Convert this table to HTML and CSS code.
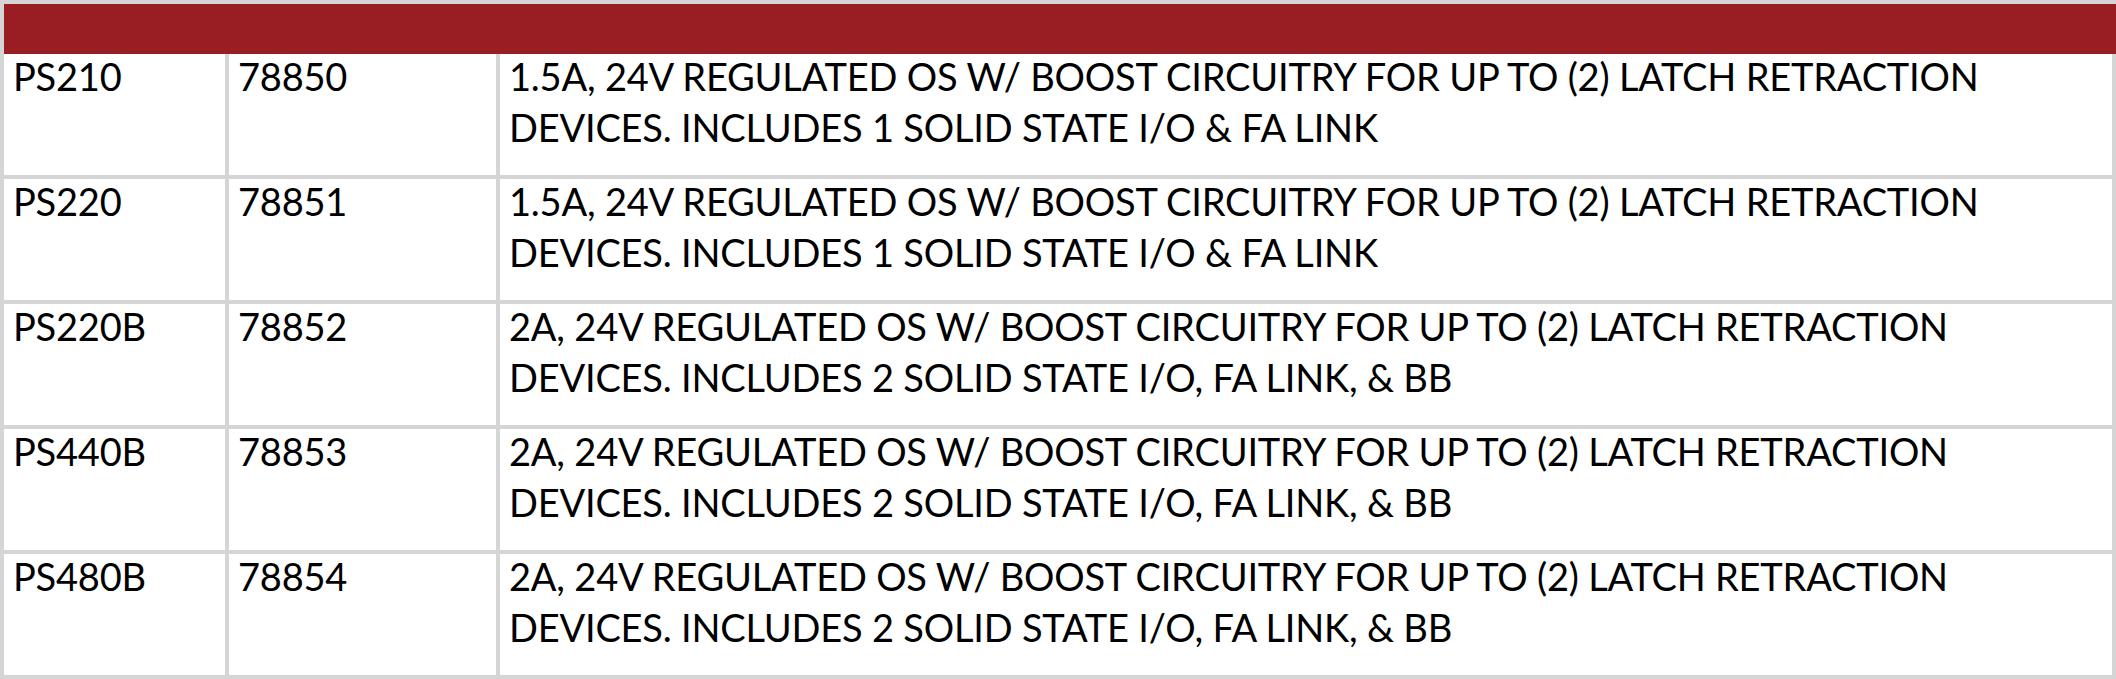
FILE: index.html
```html
<!DOCTYPE html>
<html>
<head>
<meta charset="utf-8">
<link rel="stylesheet" href="styles.css">
</head>
<body>
<div class="sheet">
  <div class="head"></div>
  <div class="grid">
    <div class="cell"><p>PS210</p></div>
    <div class="cell"><p>78850</p></div>
    <div class="cell desc"><p>1.5A, 24V REGULATED OS W/ BOOST CIRCUITRY FOR UP TO (2) LATCH RETRACTION DEVICES. INCLUDES 1 SOLID STATE I/O &amp; FA LINK</p></div>
    <div class="cell"><p>PS220</p></div>
    <div class="cell"><p>78851</p></div>
    <div class="cell desc"><p>1.5A, 24V REGULATED OS W/ BOOST CIRCUITRY FOR UP TO (2) LATCH RETRACTION DEVICES. INCLUDES 1 SOLID STATE I/O &amp; FA LINK</p></div>
    <div class="cell"><p>PS220B</p></div>
    <div class="cell"><p>78852</p></div>
    <div class="cell desc"><p>2A, 24V REGULATED OS W/ BOOST CIRCUITRY FOR UP TO (2) LATCH RETRACTION DEVICES. INCLUDES 2 SOLID STATE I/O, FA LINK, &amp; BB</p></div>
    <div class="cell"><p>PS440B</p></div>
    <div class="cell"><p>78853</p></div>
    <div class="cell desc"><p>2A, 24V REGULATED OS W/ BOOST CIRCUITRY FOR UP TO (2) LATCH RETRACTION DEVICES. INCLUDES 2 SOLID STATE I/O, FA LINK, &amp; BB</p></div>
    <div class="cell"><p>PS480B</p></div>
    <div class="cell"><p>78854</p></div>
    <div class="cell desc"><p>2A, 24V REGULATED OS W/ BOOST CIRCUITRY FOR UP TO (2) LATCH RETRACTION DEVICES. INCLUDES 2 SOLID STATE I/O, FA LINK, &amp; BB</p></div>
  </div>
</div>
</body>
</html>
```

FILE: styles.css
```css
html, body {
  margin: 0;
  padding: 0;
  background: #d5d5d5;
}
.sheet {
  width: 2116px;
  height: 679px;
  padding: 4px 0 0 4px;
  box-sizing: border-box;
  background: #d5d5d5;
  overflow: hidden;
  font-family: Lato, "Noto Sans", sans-serif;
  color: #000;
}
.head {
  height: 50px;
  background: #981e24;
}
.grid {
  display: grid;
  grid-template-columns: 221px 267px 1612px;
  grid-auto-rows: 121px;
  column-gap: 4px;
  row-gap: 4px;
}
.cell {
  background: #fff;
  font-size: 38px;
  line-height: 51px;
  letter-spacing: -0.2px;
  padding: 0 10px 0 9px;
}
.cell p {
  margin: -3px 0 0;
}
```
